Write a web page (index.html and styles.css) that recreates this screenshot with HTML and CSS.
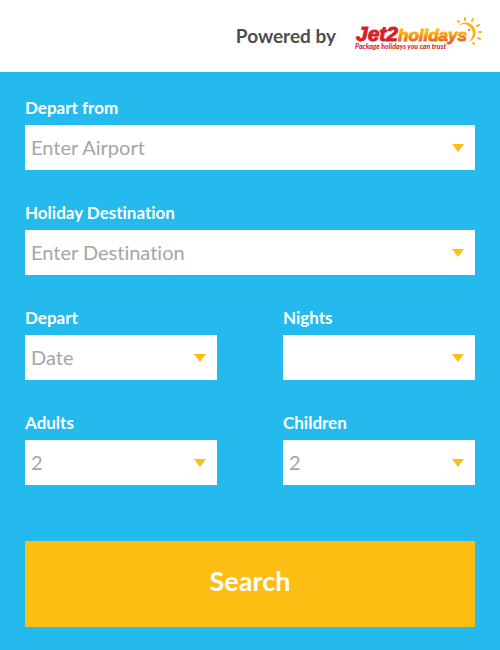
FILE: index.html
```
<!DOCTYPE html>
<html lang="en">

<head>
    <meta charset="utf-8">
    <meta name="viewport" content="width=device-width, initial-scale=1">
    <title>Holiday Search</title>
    <link rel="stylesheet" href="styles.css">
</head>

<body>
    <header class="header">
        <span class="powered">Powered by</span>
        <svg class="logo" viewBox="0 0 130 36" role="img" aria-label="Jet2holidays">
            <defs>
                <linearGradient id="gold" x1="0" y1="0" x2="0" y2="1">
                    <stop offset="0.3" stop-color="#fbb813" />
                    <stop offset="0.8" stop-color="#e8641b" />
                </linearGradient>
            </defs>
            <text class="logo-jet" x="2" y="24">Jet2</text>
            <text class="logo-holidays" x="44" y="24">holidays</text>
            <text class="logo-tagline" x="1" y="32">Package holidays you can trust</text>
            <!-- Sun -->
            <path d="M104 9 C110 3 118 5 121 12 C123 18 120 23 115 25 C118 21 120 17 118 13 C115 7 110 6 104 9 Z" fill="#f9b51a" />
            <g stroke="#f9b51a" stroke-width="2" stroke-linecap="round">
                <path d="M105 5 L104 4" />
                <path d="M111 3 L111 1" />
                <path d="M118 4 L119 2" />
                <path d="M123 9 L125 8" />
                <path d="M125 15 L127 15" />
                <path d="M124 21 L126 22" />
                <path d="M119 26 L120 27" />
            </g>
            <circle cx="115" cy="13" r="1" fill="#e2483a" />
        </svg>
    </header>
    <form class="search-form">
        <div class="field wide">
            <label for="airport">Depart from</label>
            <select id="airport" name="airport">
                <option>Enter Airport</option>
            </select>
        </div>
        <div class="field wide">
            <label for="destination">Holiday Destination</label>
            <select id="destination" name="destination">
                <option>Enter Destination</option>
            </select>
        </div>
        <div class="field">
            <label for="depart">Depart</label>
            <select id="depart" name="depart">
                <option>Date</option>
            </select>
        </div>
        <div class="field">
            <label for="nights">Nights</label>
            <select id="nights" name="nights">
                <option></option>
            </select>
        </div>
        <div class="field">
            <label for="adults">Adults</label>
            <select id="adults" name="adults">
                <option>2</option>
            </select>
        </div>
        <div class="field">
            <label for="children">Children</label>
            <select id="children" name="children">
                <option>2</option>
            </select>
        </div>
        <button class="search-button wide" type="button">Search</button>
    </form>
</body>

</html>
```

FILE: styles.css
```
* {
    box-sizing: border-box;
}

body {
    margin: 0;
    min-height: 100vh;
    display: flex;
    flex-direction: column;
    font-family: Lato, sans-serif;
    font-variant-ligatures: none;
    background-color: #24baee;
}

.header {
    display: flex;
    align-items: center;
    justify-content: flex-end;
    gap: 18px;
    height: 72px;
    padding: 0 16px 2px;
    background-color: white;
}

.powered {
    font-size: 19px;
    font-weight: 700;
    color: #4d4d4d;
}

.logo {
    width: 130px;
    height: 36px;
}

.logo-jet,
.logo-holidays {
    font-family: "Liberation Sans", sans-serif;
    font-weight: bold;
    font-style: italic;
}

.logo-jet {
    font-size: 21px;
    fill: #d71f2b;
    stroke: #d71f2b;
}

.logo-holidays {
    font-size: 17px;
    fill: url(#gold);
    stroke: url(#gold);
}

.logo-tagline {
    font-family: Lato, sans-serif;
    font-size: 7px;
    font-weight: 900;
    font-style: italic;
    fill: #d71f2b;
}

.search-form {
    display: grid;
    grid-template-columns: 1fr 1fr;
    column-gap: 66px;
    row-gap: 31px;
    padding: 24px 25px;
}

.wide {
    grid-column: 1 / -1;
}

.field {
    display: flex;
    flex-direction: column;
    gap: 5px;
}

label {
    font-size: 17px;
    font-weight: 700;
    line-height: 24px;
    color: white;
}

select {
    appearance: none;
    width: 100%;
    height: 45px;
    padding: 0 32px 2px 6px;
    border: none;
    border-radius: 0;
    font-family: inherit;
    font-size: 20px;
    font-variant-ligatures: none;
    color: #a6a6a6;
    background: white url("data:image/svg+xml,%3Csvg xmlns='http://www.w3.org/2000/svg' width='12' height='8'%3E%3Cpath d='M0 0h12L6 8z' fill='%23fdbe14'/%3E%3C/svg%3E") no-repeat right 11px center;
}

.search-button {
    height: 86px;
    margin-top: 25px;
    padding: 0 0 7px;
    border: none;
    font-family: inherit;
    font-size: 27px;
    font-weight: 700;
    color: white;
    background-color: #fdbe14;
    cursor: pointer;
}
```
